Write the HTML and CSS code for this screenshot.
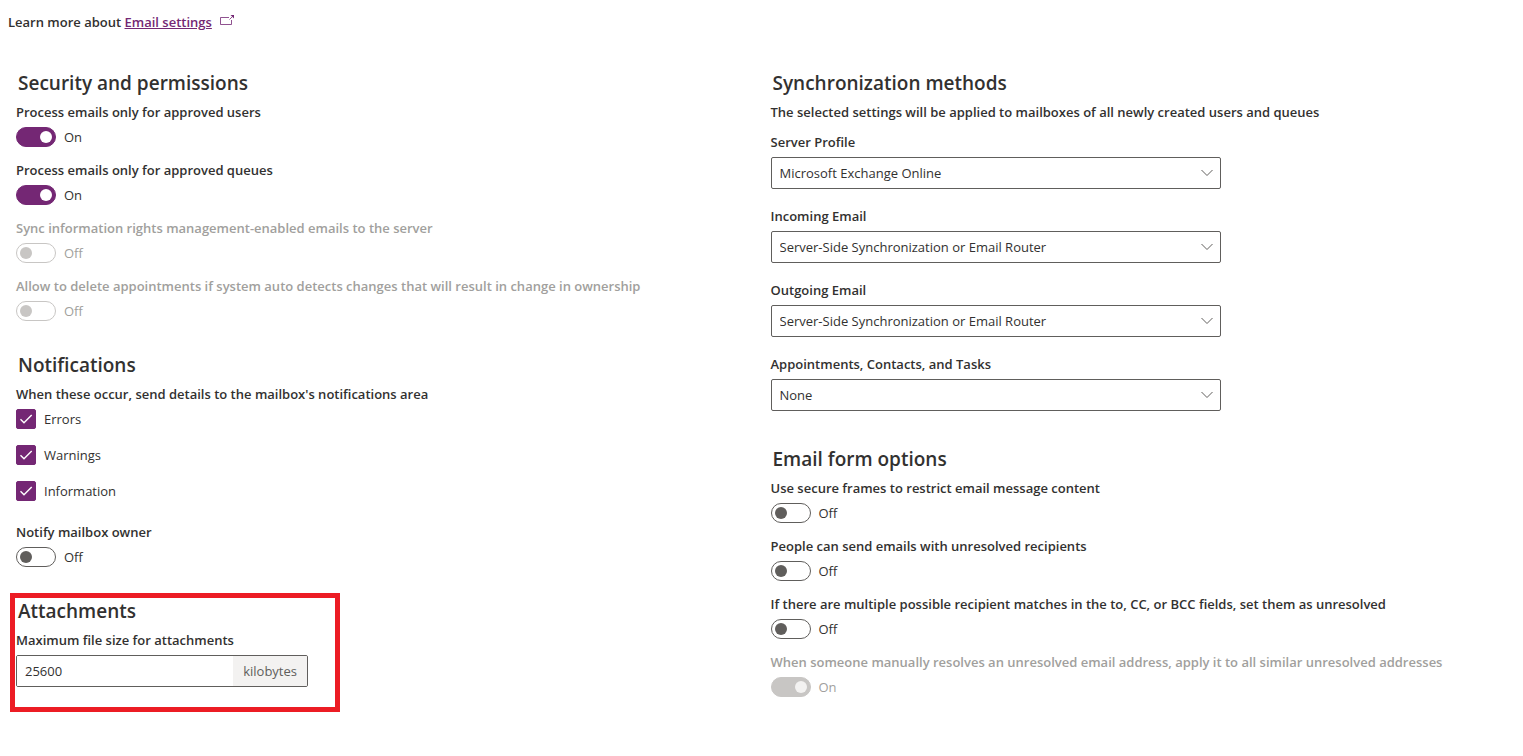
FILE: index.html
```html
<!DOCTYPE html>
<html lang="en">
<head>
<meta charset="utf-8">
<title>Email settings</title>
<link rel="stylesheet" href="styles.css">
</head>
<body>
<p class="learn">Learn more about <a href="#">Email settings</a>
<svg class="ext" width="14" height="12" viewBox="0 0 14 12" fill="none" stroke="#742774"><path stroke-opacity=".8" d="M9 2.5H.5v7h11V5"/><path stroke-opacity=".8" d="M9.5 4.5 12.5 1.5"/><path fill="#742774" stroke="none" d="M10.5 0H14v3.5z"/></svg></p>
<main class="columns">
<div class="col">
<section class="group">
<h2>Security and permissions</h2>
<div class="field"><label class="label" for="t1">Process emails only for approved users</label><div class="row"><input class="toggle" type="checkbox" role="switch" id="t1" checked><span>On</span></div></div>
<div class="field"><label class="label" for="t2">Process emails only for approved queues</label><div class="row"><input class="toggle" type="checkbox" role="switch" id="t2" checked><span>On</span></div></div>
<div class="field off"><label class="label" for="t3">Sync information rights management-enabled emails to the server</label><div class="row"><input class="toggle" type="checkbox" role="switch" id="t3" disabled><span>Off</span></div></div>
<div class="field off"><label class="label" for="t4">Allow to delete appointments if system auto detects changes that will result in change in ownership</label><div class="row"><input class="toggle" type="checkbox" role="switch" id="t4" disabled><span>Off</span></div></div>
</section>
<section class="group notify">
<h2>Notifications</h2>
<fieldset class="checks"><legend class="label">When these occur, send details to the mailbox's notifications area</legend>
<label class="check"><span class="tick"><input type="checkbox" checked><svg width="20" height="20" viewBox="0 0 20 20" fill="none" stroke="#fff" stroke-width="1.4"><path d="M4.5 10.2 8 13.7 15.7 6"/></svg></span>Errors</label>
<label class="check"><span class="tick"><input type="checkbox" checked><svg width="20" height="20" viewBox="0 0 20 20" fill="none" stroke="#fff" stroke-width="1.4"><path d="M4.5 10.2 8 13.7 15.7 6"/></svg></span>Warnings</label>
<label class="check"><span class="tick"><input type="checkbox" checked><svg width="20" height="20" viewBox="0 0 20 20" fill="none" stroke="#fff" stroke-width="1.4"><path d="M4.5 10.2 8 13.7 15.7 6"/></svg></span>Information</label>
</fieldset>
<div class="field"><label class="label" for="t5">Notify mailbox owner</label><div class="row"><input class="toggle" type="checkbox" role="switch" id="t5"><span>Off</span></div></div>
</section>
<section class="highlight">
<h2>Attachments</h2>
<label class="label" for="size">Maximum file size for attachments</label>
<div class="size"><input id="size" type="text" value="25600"><span>kilobytes</span></div>
</section>
</div>
<div class="col">
<section class="group sync">
<h2>Synchronization methods</h2>
<p class="label intro">The selected settings will be applied to mailboxes of all newly created users and queues</p>
<div class="pick"><label class="label" for="s1">Server Profile</label><div class="box"><select id="s1"><option>Microsoft Exchange Online</option></select><svg width="12" height="8" viewBox="0 0 12 8" fill="none" stroke="#605e5c"><path d="m.5 1 5.5 5.5L11.5 1"/></svg></div></div>
<div class="pick"><label class="label" for="s2">Incoming Email</label><div class="box"><select id="s2"><option>Server-Side Synchronization or Email Router</option></select><svg width="12" height="8" viewBox="0 0 12 8" fill="none" stroke="#605e5c"><path d="m.5 1 5.5 5.5L11.5 1"/></svg></div></div>
<div class="pick"><label class="label" for="s3">Outgoing Email</label><div class="box"><select id="s3"><option>Server-Side Synchronization or Email Router</option></select><svg width="12" height="8" viewBox="0 0 12 8" fill="none" stroke="#605e5c"><path d="m.5 1 5.5 5.5L11.5 1"/></svg></div></div>
<div class="pick"><label class="label" for="s4">Appointments, Contacts, and Tasks</label><div class="box"><select id="s4"><option>None</option></select><svg width="12" height="8" viewBox="0 0 12 8" fill="none" stroke="#605e5c"><path d="m.5 1 5.5 5.5L11.5 1"/></svg></div></div>
</section>
<section class="group">
<h2>Email form options</h2>
<div class="field"><label class="label" for="t6">Use secure frames to restrict email message content</label><div class="row"><input class="toggle" type="checkbox" role="switch" id="t6"><span>Off</span></div></div>
<div class="field"><label class="label" for="t7">People can send emails with unresolved recipients</label><div class="row"><input class="toggle" type="checkbox" role="switch" id="t7"><span>Off</span></div></div>
<div class="field"><label class="label" for="t8">If there are multiple possible recipient matches in the to, CC, or BCC fields, set them as unresolved</label><div class="row"><input class="toggle" type="checkbox" role="switch" id="t8"><span>Off</span></div></div>
<div class="field off"><label class="label" for="t9">When someone manually resolves an unresolved email address, apply it to all similar unresolved addresses</label><div class="row"><input class="toggle" type="checkbox" role="switch" id="t9" checked disabled><span>On</span></div></div>
</section>
</div>
</main>
</body>
</html>
```
FILE: styles.css
```css
* { box-sizing: border-box; }
body { margin: 0; padding: 12px 6px 0 8px; background: #fff; color: #323130; font: 13px/20px "Open Sans", "Noto Sans", sans-serif; }
p, h2, fieldset { margin: 0; padding: 0; border: 0; }
.learn { font-weight: 600; }
.learn a { color: #742774; }
.ext { margin-left: 5px; vertical-align: 0; }
.columns { display: grid; grid-template-columns: 1fr 1fr; padding-top: 36px; }
.col { padding-left: 8px; }
h2 { padding: 0 2px; font-size: 19px; line-height: 30px; font-weight: 600; margin-bottom: 4px; }
.label { display: block; padding: 0; font-weight: 600; line-height: 20px; }
.group { margin-bottom: 20px; }
.group.notify { margin-bottom: 17px; }
.group.sync { margin-bottom: 33px; }
.field { min-height: 58px; }
.field:last-child { min-height: 54px; }
.row { display: flex; align-items: center; gap: 8px; margin-top: 5px; }
.toggle { appearance: none; flex: none; display: flex; align-items: center; width: 40px; height: 20px; margin: 0; padding: 0 3px; border: 1px solid #605e5c; border-radius: 10px; background: #fff; }
.toggle::before { content: ""; width: 12px; height: 12px; border-radius: 50%; background: #605e5c; }
.toggle:checked { justify-content: flex-end; background: #742774; border-color: #742774; }
.toggle:checked::before { background: #fff; }
.off { color: #a19f9d; }
.off .toggle { border-color: #c8c6c4; }
.off .toggle::before { background: #c8c6c4; }
.off .toggle:checked { background: #c8c6c4; }
.off .toggle:checked::before { background: #f3f2f1; }
.checks { display: flex; flex-direction: column; gap: 16px; margin-bottom: 21px; }
.checks legend { margin-bottom: 5px; }
.check { display: flex; gap: 8px; }
.tick { display: grid; }
.tick > * { grid-area: 1 / 1; }
.tick svg { pointer-events: none; visibility: hidden; }
.tick input { appearance: none; width: 20px; height: 20px; margin: 0; border: 1px solid #605e5c; border-radius: 2px; }
.tick input:checked { border-color: #742774; background: #742774; }
.tick input:checked + svg { visibility: visible; }
.highlight { width: 330px; margin-left: -6px; padding: 0 0 20px 1px; border: 5px solid #ec1c24; }
.highlight h2 { line-height: 26px; margin-bottom: 6px; }
.size { display: flex; width: 292px; height: 32px; margin-top: 5px; border: 1px solid #605e5c; border-radius: 2px; overflow: hidden; }
.size input { flex: 1; min-width: 0; border: 0; padding: 0 8px; font: inherit; color: inherit; }
.size span { padding: 5px 10px; background: #f3f2f1; color: #605e5c; }
.intro { margin-bottom: 10px; }
.pick { margin-bottom: 17px; }
.box { display: grid; align-items: center; width: 450px; margin-top: 5px; }
.box > * { grid-area: 1 / 1; }
.box svg { justify-self: end; margin-right: 8px; pointer-events: none; }
select { appearance: none; width: 100%; height: 32px; padding: 0 8px; border: 1px solid #605e5c; border-radius: 2px; background: #fff; font: inherit; color: inherit; }
```
